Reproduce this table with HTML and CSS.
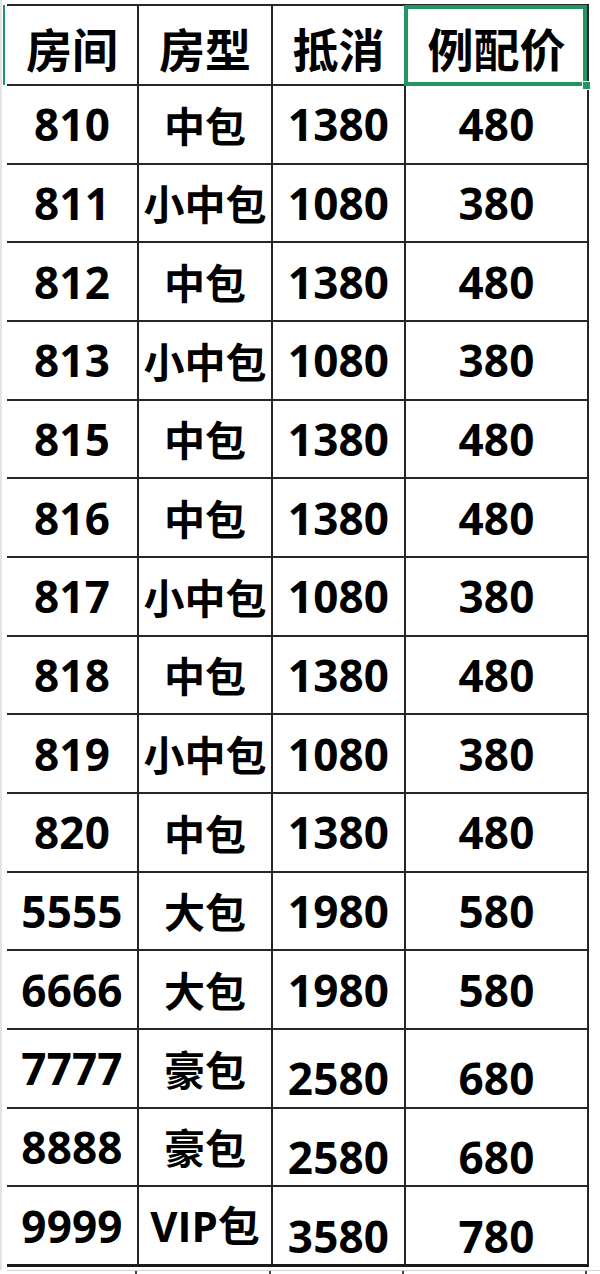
FILE: index.html
```html
<!DOCTYPE html>
<html lang="zh">
<head>
<meta charset="utf-8">
<title>房型价格表</title>
<link rel="stylesheet" href="styles.css">
</head>
<body>
<div class="sheet">
  <div class="rowmark"></div>
  <div class="grid">
    <div class="cell head">房间</div>
    <div class="cell head">房型</div>
    <div class="cell head">抵消</div>
    <div class="cell head selected">例配价<span class="handle"></span></div>

    <div class="cell num">810</div><div class="cell cn">中包</div><div class="cell num">1380</div><div class="cell num">480</div>
    <div class="cell num">811</div><div class="cell cn">小中包</div><div class="cell num">1080</div><div class="cell num">380</div>
    <div class="cell num">812</div><div class="cell cn">中包</div><div class="cell num">1380</div><div class="cell num">480</div>
    <div class="cell num">813</div><div class="cell cn">小中包</div><div class="cell num">1080</div><div class="cell num">380</div>
    <div class="cell num">815</div><div class="cell cn">中包</div><div class="cell num">1380</div><div class="cell num">480</div>
    <div class="cell num">816</div><div class="cell cn">中包</div><div class="cell num">1380</div><div class="cell num">480</div>
    <div class="cell num">817</div><div class="cell cn">小中包</div><div class="cell num">1080</div><div class="cell num">380</div>
    <div class="cell num">818</div><div class="cell cn">中包</div><div class="cell num">1380</div><div class="cell num">480</div>
    <div class="cell num">819</div><div class="cell cn">小中包</div><div class="cell num">1080</div><div class="cell num">380</div>
    <div class="cell num">820</div><div class="cell cn">中包</div><div class="cell num">1380</div><div class="cell num">480</div>
    <div class="cell num">5555</div><div class="cell cn">大包</div><div class="cell num">1980</div><div class="cell num">580</div>
    <div class="cell num">6666</div><div class="cell cn">大包</div><div class="cell num">1980</div><div class="cell num">580</div>
    <div class="cell num">7777</div><div class="cell cn">豪包</div><div class="cell num low">2580</div><div class="cell num low">680</div>
    <div class="cell num">8888</div><div class="cell cn">豪包</div><div class="cell num low">2580</div><div class="cell num low">680</div>
    <div class="cell num">9999</div><div class="cell cn mixed">VIP包</div><div class="cell num low">3580</div><div class="cell num low">780</div>
  </div>
  <div class="tail">
    <div class="tcell"></div><div class="tcell"></div><div class="tcell"></div><div class="tcell"></div>
  </div>
</div>
</body>
</html>
```

FILE: styles.css
```css
html, body {
  margin: 0;
  padding: 0;
  background: #ffffff;
}

body {
  width: 600px;
  height: 1274px;
  overflow: hidden;
  font-family: "Open Sans", "Noto Sans CJK SC", sans-serif;
  color: #000;
}

.sheet {
  position: relative;
  padding: 4px 0 0 5px;
  height: 1270px;
  border-left: 2px solid #e3e3e3;
  box-sizing: border-box;
}

.rowmark {
  position: absolute;
  left: 1px;
  top: 5px;
  width: 2px;
  height: 80px;
  background: #1f9661;
}

.grid {
  display: grid;
  grid-template-columns: 130px 132px 131px 181px;
  grid-template-rows: 78px repeat(15, 76.67px);
  gap: 2px;
  background: #262626;
  border-top: 2px solid #262626;
  border-right: 2px solid #262626;
  border-bottom: 3px solid #1a1a1a;
  width: max-content;
}

.cell {
  background: #fff;
  display: flex;
  align-items: center;
  justify-content: center;
  font-weight: 700;
  white-space: nowrap;
  line-height: 1;
}

.head {
  font-family: "Noto Sans CJK SC", sans-serif;
  font-size: 46px;
  padding-top: 3px;
  box-sizing: border-box;
}

.num {
  font-size: 44px;
  letter-spacing: 0.2px;
}

.cn {
  font-family: "Noto Sans CJK SC", sans-serif;
  font-size: 41px;
}

.mixed {
  font-family: "Open Sans", "Noto Sans CJK SC", sans-serif;
  font-size: 42px;
}

.low {
  padding-top: 20px;
  box-sizing: border-box;
}

.selected {
  position: relative;
  overflow: visible;
}

.selected::after {
  content: "";
  position: absolute;
  left: -2px;
  top: -1px;
  right: 0;
  bottom: -2px;
  border: 4px solid #1f9661;
  z-index: 1;
}

.handle {
  position: absolute;
  right: -4px;
  bottom: -6px;
  width: 7px;
  height: 7px;
  background: #1f9661;
  border: 1px solid #fff;
  z-index: 2;
}

.tail {
  display: grid;
  grid-template-columns: 130px 132px 131px 181px 14px;
  gap: 2px;
  height: 10px;
  border-top: 1px solid #d4d4d4;
  margin-top: 3px;
}

.tcell {
  border-right: 2px solid #444;
}
```
